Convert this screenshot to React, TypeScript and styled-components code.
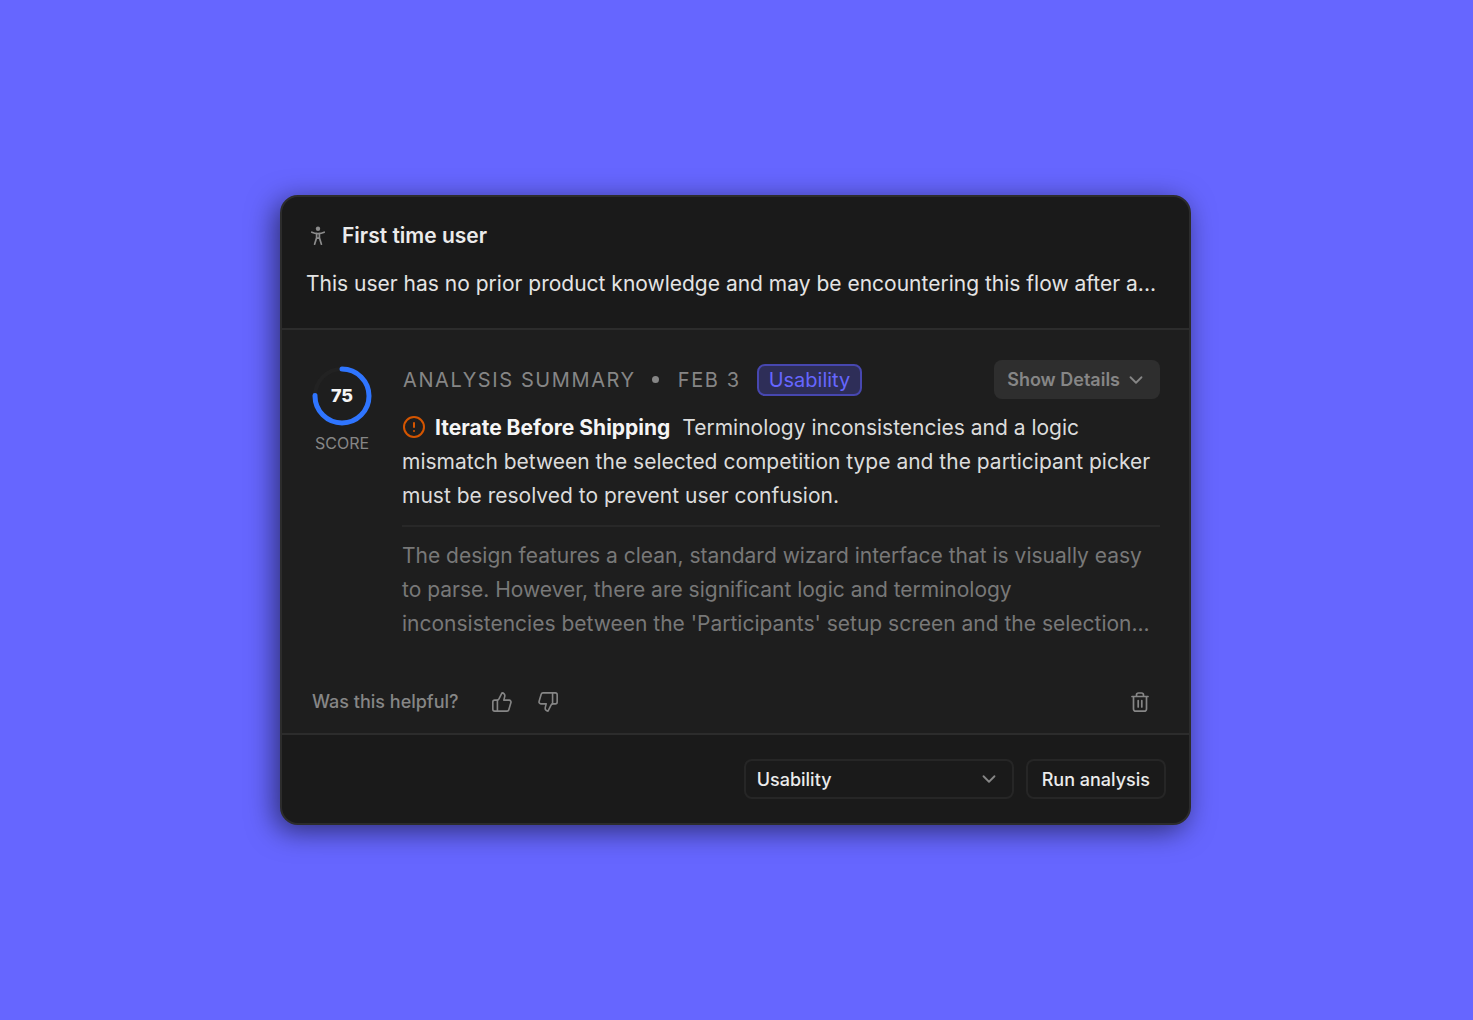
import React from "react";
import styled, { createGlobalStyle } from "styled-components";
import { ChevronDown, CircleAlert, ThumbsDown, ThumbsUp } from "lucide-react";

const GlobalStyle = createGlobalStyle`
  * { box-sizing: border-box; }
  body {
    margin: 0;
    background: #6666ff;
    font-family: Inter, "Liberation Sans", sans-serif;
  }
  h2, h3, p { margin: 0; }
  button, select { font-family: inherit; }
`;

const Page = styled.main`
  min-height: 100vh;
  display: grid;
  place-items: center;
  padding: 24px 26px 24px 24px;
`;

const Card = styled.article`
  width: 100%;
  max-width: 911px;
  border: 2px solid #2c2c2c;
  border-radius: 18px;
  background: #1a1a1a;
  box-shadow: -5px 6px 28px rgba(0, 0, 0, 0.55);
`;

const Header = styled.header`
  display: grid;
  gap: 14px;
  padding: 22px 24px 27px;
  border-bottom: 2px solid #2c2c2c;
`;

const TitleRow = styled.div`
  display: flex;
  align-items: center;
  gap: 12px;
`;

const Title = styled.h2`
  color: #ebebeb;
  font-size: 21px;
  font-weight: 600;
  line-height: 34px;
`;

const Description = styled.p`
  color: #e4e4e4;
  font-size: 21px;
  line-height: 34px;
`;

const Body = styled.section`
  padding: 30px 29px 8px 30px;
  background: #1e1e1e;
`;

const Summary = styled.div`
  display: grid;
  grid-template-columns: 60px minmax(0, 1fr);
  gap: 30px;
`;

const Score = styled.div`
  display: flex;
  flex-direction: column;
  align-items: center;
  gap: 7px;
  padding-top: 6px;
  color: #868686;
  font-size: 16px;
  font-weight: 400;
  line-height: 20px;
`;

const Ring = styled.div`
  display: grid;
  place-items: center;

  > * { grid-area: 1 / 1; }
`;

const ScoreValue = styled.strong`
  color: #f5f5f5;
  font-size: 18px;
  font-weight: 800;
`;

const Meta = styled.div`
  display: flex;
  align-items: center;
  gap: 16px;
  margin-bottom: 12px;
  padding-left: 1px;
  color: #868686;
  font-size: 20px;
  letter-spacing: 0.08em;
  line-height: 24px;
`;

const Dot = styled.span`
  width: 7px;
  height: 7px;
  margin-right: 3px;
  border-radius: 50%;
  background: #868686;
`;

const Tag = styled.span`
  padding: 0 10px;
  border: 2px solid #4747b0;
  border-radius: 8px;
  background: #2e2e58;
  color: #6666ff;
  font-size: 20px;
  letter-spacing: 0;
  line-height: 28px;
`;

const DetailsButton = styled.button`
  display: flex;
  align-items: center;
  gap: 5px;
  height: 39px;
  margin-left: auto;
  padding: 0 13px;
  border: 0;
  border-radius: 8px;
  background: #2e2e2e;
  color: #868686;
  font-size: 18px;
  font-weight: 600;
`;

const Verdict = styled.p`
  padding-bottom: 12px;
  border-bottom: 2px solid #282828;
  color: #dcdcdc;
  font-size: 21px;
  font-weight: 400;
  line-height: 34px;

  svg { margin-right: 9px; vertical-align: -4px; }
  strong { margin-right: 6px; color: #f5f5f5; font-weight: 700; }
`;

const Detail = styled.p`
  padding-top: 12px;
  color: #787878;
  font-size: 21px;
  font-weight: 400;
  line-height: 34px;
`;

const Feedback = styled.div`
  display: flex;
  align-items: center;
  margin-top: 38px;
  color: #868686;
  font-size: 18px;
  font-weight: 500;
  line-height: 46px;
`;

const IconButton = styled.button<{ $end?: boolean }>`
  display: grid;
  place-items: center;
  width: 40px;
  height: 46px;
  margin-left: ${(p) => (p.$end ? "auto" : "0")};
  padding: 0;
  border: 0;
  background: none;
  color: #868686;
`;

const Votes = styled.div`
  display: flex;
  gap: 6px;
  margin-left: 23px;
`;

const Footer = styled.footer`
  display: flex;
  justify-content: flex-end;
  gap: 12px;
  padding: 24px 23px 24px 24px;
  border-top: 2px solid #2c2c2c;
`;

const SelectBox = styled.div`
  display: grid;
  align-items: center;
  width: 270px;

  > * { grid-area: 1 / 1; }
  svg { justify-self: end; margin-right: 14px; pointer-events: none; }
`;

const Select = styled.select`
  appearance: none;
  width: 100%;
  height: 40px;
  padding: 0 40px 0 11px;
  border: 2px solid #262626;
  border-radius: 8px;
  background: #1a1a1a;
  color: #ebebeb;
  font-size: 18px;
  font-weight: 500;
`;

const RunButton = styled.button`
  height: 40px;
  padding: 0 14px;
  border: 2px solid #262626;
  border-radius: 8px;
  background: #1a1a1a;
  color: #ebebeb;
  font-size: 18px;
  font-weight: 500;
`;

const RADIUS = 27;
const CIRCUMFERENCE = 2 * Math.PI * RADIUS;

function ScoreRing({ value }: { value: number }) {
  return (
    <Ring>
      <svg width="60" height="60" viewBox="0 0 60 60" fill="none" aria-hidden="true">
        <circle cx="30" cy="30" r={RADIUS} stroke="#222222" strokeWidth="4" />
        <circle
          cx="30"
          cy="30"
          r={RADIUS}
          stroke="#2f75ff"
          strokeWidth="5"
          strokeLinecap="round"
          strokeDasharray={`${(CIRCUMFERENCE * value) / 100} ${CIRCUMFERENCE}`}
          transform="rotate(-90 30 30)"
        />
      </svg>
      <ScoreValue>{value}</ScoreValue>
    </Ring>
  );
}

function PersonIcon() {
  return (
    <svg width="24" height="24" viewBox="0 0 24 24" fill="none" stroke="#8c8c8c" strokeWidth="1.7" strokeLinecap="round" strokeLinejoin="round" aria-hidden="true">
      <circle cx="12" cy="4.8" r="2.2" fill="#8c8c8c" stroke="none" />
      <path d="M5.8 8.2c2 1 4 1.4 6.2 1.4s4.2-.4 6.200-1.400" />
      <path d="M10.600 9.600v4.200L8.600 20.200M13.400 9.600v4.200l2 6.400M10.600 14.200h2.800" />
    </svg>
  );
}

function TrashIcon() {
  return (
    <svg width="24" height="24" viewBox="0 0 24 24" fill="none" stroke="currentColor" strokeWidth="1.7" strokeLinecap="round" strokeLinejoin="round" aria-hidden="true">
      <path d="M4 6.500h16M8.500 6.200V5a2 2 0 0 1 2-2h3a2 2 0 0 1 2 2v1.200" />
      <path d="M5.500 6.800V19a2.200 2.200 0 0 0 2.200 2.200h8.600A2.200 2.200 0 0 0 18.500 19V6.800" />
      <path d="M10.200 10.500v6.500M13.800 10.500v6.500" />
    </svg>
  );
}

export default function App() {
  return (
    <>
      <GlobalStyle />
      <Page>
        <Card>
          <Header>
            <TitleRow>
              <PersonIcon />
              <Title>First time user</Title>
            </TitleRow>
            <Description>
              This user has no prior product knowledge and may be encountering this flow after a...
            </Description>
          </Header>
          <Body>
            <Summary>
              <Score>
                <ScoreRing value={75} />
                <span>SCORE</span>
              </Score>
              <div>
                <Meta>
                  <span>ANALYSIS SUMMARY</span>
                  <Dot />
                  <span>FEB 3</span>
                  <Tag>Usability</Tag>
                  <DetailsButton type="button">
                    Show Details
                    <ChevronDown size={22} />
                  </DetailsButton>
                </Meta>
                <Verdict>
                  <CircleAlert size={24} color="#d45500" />
                  <strong>Iterate Before Shipping</strong> Terminology inconsistencies and a logic mismatch
                  between the selected competition type and the participant picker must be resolved to
                  prevent user confusion.
                </Verdict>
                <Detail>
                  The design features a clean, standard wizard interface that is visually easy to parse.
                  However, there are significant logic and terminology inconsistencies between the
                  'Participants' setup screen and the selection...
                </Detail>
              </div>
            </Summary>
            <Feedback>
              <span>Was this helpful?</span>
              <Votes>
                <IconButton type="button" aria-label="Helpful">
                  <ThumbsUp size={22} strokeWidth={1.75} />
                </IconButton>
                <IconButton type="button" aria-label="Not helpful">
                  <ThumbsDown size={22} strokeWidth={1.75} />
                </IconButton>
              </Votes>
              <IconButton type="button" aria-label="Delete analysis" $end>
                <TrashIcon />
              </IconButton>
            </Feedback>
          </Body>
          <Footer>
            <SelectBox>
              <Select aria-label="Analysis type" defaultValue="Usability">
                <option>Usability</option>
              </Select>
              <ChevronDown size={22} color="#868686" />
            </SelectBox>
            <RunButton type="button">Run analysis</RunButton>
          </Footer>
        </Card>
      </Page>
    </>
  );
}
